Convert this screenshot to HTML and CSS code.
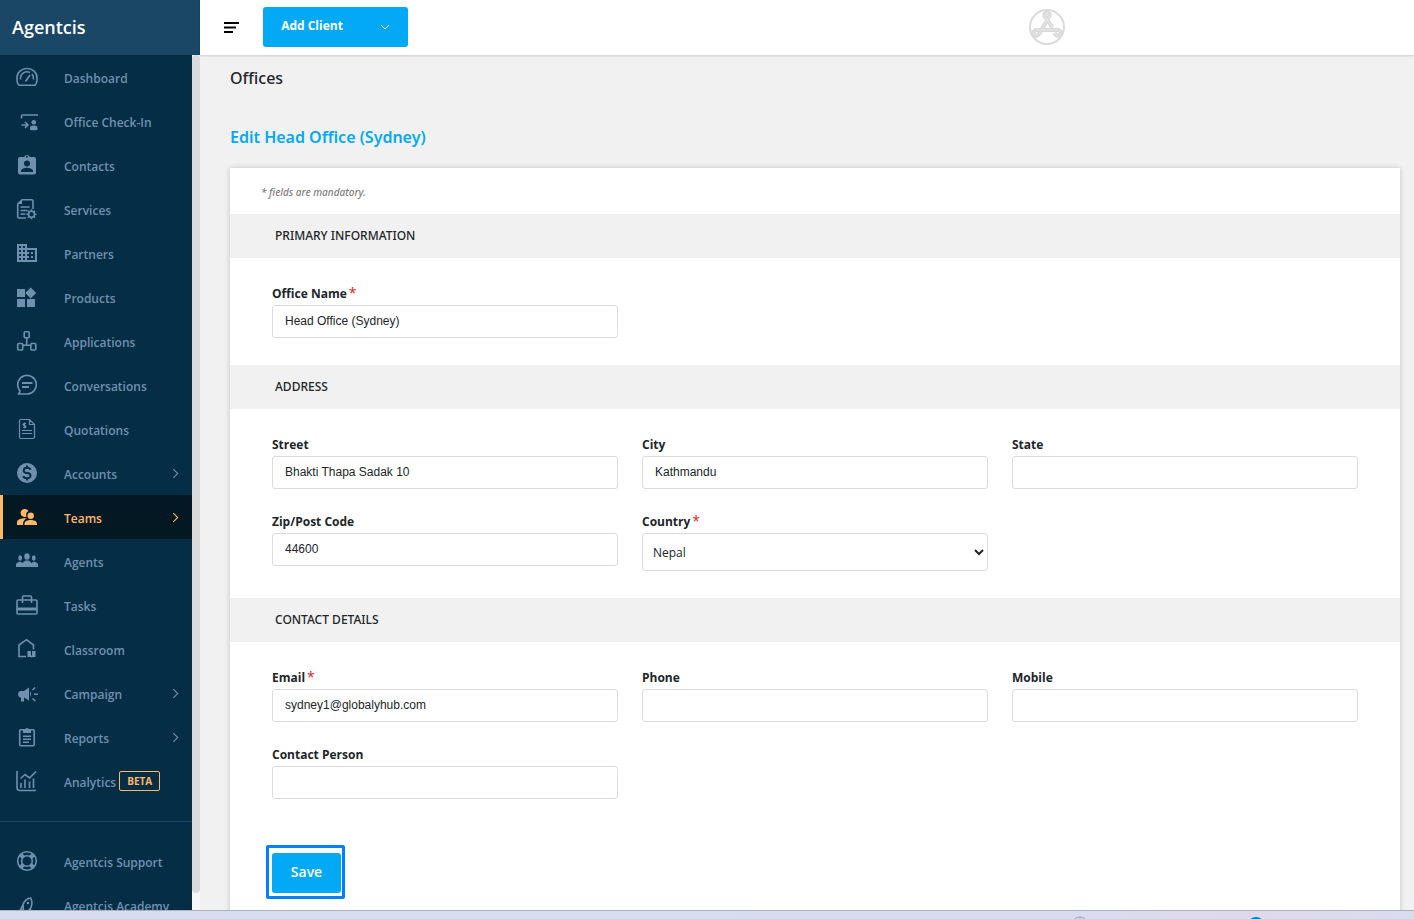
FILE: index.html
```html
<!DOCTYPE html>
<html lang="en">
<head>
    <meta charset="UTF-8">
    <meta name="viewport" content="width=device-width, initial-scale=1.0">
    <title>Edit Office - Agentcis</title>
    <link rel="stylesheet" href="styles.css">
</head>
<body>

    <div class="app">
        <!-- Sidebar -->
        <aside class="sidebar">
            <div class="brand">Agentcis</div>
            <div class="sidebar-scroll">
                <nav class="menu">
                    <a href="#" class="menu-item">
                        <svg class="icon" viewBox="0 0 22 22"><path d="M3 19.200h16q2-1.500 2-6.200v-1.500a10 9 0 0 0-20 0V13q0 4.700 2 6.200z"/><path d="M4.500 13.500v-1.500a6.500 6.500 0 0 1 9.500-5.500M16 8q1.500 2 1.500 5.500M9.500 15.500l4.500-6.500"/></svg>
                        <span>Dashboard</span>
                    </a>
                    <a href="#" class="menu-item">
                        <svg class="icon" viewBox="0 0 22 22"><path d="M5.500 8.500V6q0-1 1-1H22M5.500 15h6M9 12l3 3-3 3"/><circle class="fill" cx="17.800" cy="12.300" r="2.300"/><path class="fill" d="M14 19.500v-1q0-3 3-3h1.500q3 0 3 3v1q-.5.700-1.500.700h-4.500q-1 0-1.500-.7z"/></svg>
                        <span>Office Check-In</span>
                    </a>
                    <a href="#" class="menu-item">
                        <svg class="icon" viewBox="0 0 22 22"><path class="fill" fill-rule="evenodd" d="M4 3h4.300a2.800 2.800 0 0 1 5.400 0H18q2 0 2 2v13.500q0 2-2 2H4q-2 0-2-2V5q0-2 2-2zm7-1.200a1 1 0 1 0 0 2 1 1 0 0 0 0-2zm0 4.700a3 3 0 1 0 0 6 3 3 0 0 0 0-6zM5 18h12v-1c0-2-4-3.200-6-3.200S5 15 5 17z"/></svg>
                        <span>Contacts</span>
                    </a>
                    <a href="#" class="menu-item">
                        <svg class="icon" viewBox="0 0 22 22"><path d="M17 11V3q0-1.300-1.300-1.300H6L1.700 6v12.500q0 1.500 1.500 1.500H10M4.500 9h9M4.500 12.500h7M4.500 16h5"/><path class="fill" d="M1.700 6L6 1.700V6z"/><circle cx="15.500" cy="16.200" r="3"/><path d="M15.500 11.200v2M15.500 19.200v2M10.500 16.200h2M18.500 16.200h2M12 12.700l1.400 1.400M17.600 18.300l1.400 1.400M12 19.700l1.400-1.400M17.600 14.100l1.400-1.400"/></svg>
                        <span>Services</span>
                    </a>
                    <a href="#" class="menu-item">
                        <svg class="icon" viewBox="0 0 22 22"><path class="fill" fill-rule="evenodd" d="M1 2h10v4h10v14H1zm2 2v2h2V4zm4 0v2h2V4zM3 8v2h2V8zm4 0v2h2V8zm-4 4v2h2v-2zm4 0v2h2v-2zm-4 4v2h2v-2zm4 0v2h2v-2zm4-8v2h2v2h-2v2h2v2h-2v2h8V8zm4 2h2v2h-2zm0 4h2v2h-2z"/></svg>
                        <span>Partners</span>
                    </a>
                    <a href="#" class="menu-item">
                        <svg class="icon" viewBox="0 0 22 22"><path class="fill" d="M1 3h8v8H1zM1 13h8v8H1zM11 13h8v8h-8zM14.700 1.500l5.500 5.500-5.500 5.500L9.200 7z"/></svg>
                        <span>Products</span>
                    </a>
                    <a href="#" class="menu-item">
                        <svg class="icon" viewBox="0 0 22 22"><rect x="8.200" y="1.700" width="5" height="6" rx="1"/><rect x="1.700" y="13.500" width="5" height="6.500" rx="1"/><rect x="14.800" y="13.500" width="5" height="6.500" rx="1"/><path d="M10.700 8v7M6.700 15.200h8"/></svg>
                        <span>Applications</span>
                    </a>
                    <a href="#" class="menu-item">
                        <svg class="icon" viewBox="0 0 22 22"><path d="M2 20h9.500a9.300 9.300 0 1 0-8.900-5.400L4 17q0 2-2 3z"/><path class="bold" d="M6 9h10.500M6 13h7"/></svg>
                        <span>Conversations</span>
                    </a>
                    <a href="#" class="menu-item">
                        <svg class="icon thin" viewBox="0 0 22 22"><path d="M3.500 3q0-1.500 1.500-1.500h8.500l5 5V19q0 1.500-1.500 1.500H5q-1.500 0-1.500-1.500zM13.500 1.500v5h5M6 12.500h10M6 15.500h10M10 5.500H8.500Q7 5.500 7 6.500t1.500 1 1.500 1-1.500 1H7M8.500 4.500v6"/></svg>
                        <span>Quotations</span>
                    </a>
                    <a href="#" class="menu-item">
                        <svg class="icon" viewBox="0 0 22 22"><circle class="fill" cx="11" cy="11" r="10"/><path class="cut" d="M14.500 7.800Q14 5.800 11 5.800T7.700 8.300 11 11t3.500 2.700-3.500 2.500-3.700-2M11 3.500v2.300M11 16.200v2.300"/></svg>
                        <span>Accounts</span>
                        <svg class="arrow" viewBox="0 0 8 10"><path d="M2 1l4 4-4 4"/></svg>
                    </a>
                    <a href="#" class="menu-item active">
                        <svg class="icon" viewBox="0 0 22 22"><path class="fill" d="M9 3a4 4 0 0 1 3.500 2 4 4 0 0 0-2 5.500A4 4 0 1 1 9 3zM1 19v-2.500C1 14 4 12.500 8 12.300c1 0 2 .1 2.600.3C8 14 7 15.500 7 19z"/><circle class="fill" cx="14.700" cy="9.800" r="3.200"/><path class="fill" d="M8.500 19v-1.500c0-2.500 3.500-3.500 6.200-3.500s6.300 1 6.300 3.500V19z"/></svg>
                        <span>Teams</span>
                        <svg class="arrow" viewBox="0 0 8 10"><path d="M2 1l4 4-4 4"/></svg>
                    </a>
                    <a href="#" class="menu-item">
                        <svg class="icon" viewBox="0 0 22 22"><ellipse class="fill" cx="11" cy="6.500" rx="2.700" ry="3.300"/><ellipse class="fill" cx="4.200" cy="8" rx="1.900" ry="2.700"/><ellipse class="fill" cx="17.800" cy="8" rx="1.900" ry="2.700"/><path class="fill" d="M0 17v-2.500q0-1.500 4-3 1.500.7 2.500 1.500 1-1.300 3-2.500h3q2 1.200 3 2.500 1-.8 2.500-1.500 4 1.500 4 3V17z"/></svg>
                        <span>Agents</span>
                    </a>
                    <a href="#" class="menu-item">
                        <svg class="icon" viewBox="0 0 22 22"><rect x="1" y="6" width="20" height="14" rx="1"/><path d="M6.500 9V3q0-1 1-1h7q1 0 1 1v6"/><path class="band" d="M1 15h20"/></svg>
                        <span>Tasks</span>
                    </a>
                    <a href="#" class="menu-item">
                        <svg class="icon" viewBox="0 0 22 22"><path d="M10 18.500H3V7l7.500-5.300L17.500 7v4.500"/><path class="fill" d="M11.500 13h2.500q1 0 1.500 1 .5-1 1.500-1h2.500v6H17q-1 0-1.500.500-.5-.5-1.500-.500h-2.500z"/><path class="cut-thin" d="M15.500 13v4.500"/></svg>
                        <span>Classroom</span>
                    </a>
                    <a href="#" class="menu-item">
                        <svg class="icon" viewBox="0 0 22 22"><path class="fill" d="M4 9h4l5-3.500v13L8 15.500v4H5v-4H4q-2-1-2-3.200T4 9zM14 9q2 3 0 6z"/><path d="M18 12.200h4M16.500 8l2.800-2.500M16.500 16.500l2.800 2.500"/></svg>
                        <span>Campaign</span>
                        <svg class="arrow" viewBox="0 0 8 10"><path d="M2 1l4 4-4 4"/></svg>
                    </a>
                    <a href="#" class="menu-item">
                        <svg class="icon" viewBox="0 0 22 22"><rect x="3.700" y="3.700" width="14.500" height="16" rx="1"/><path class="fill" d="M7 3h2.300a1.900 1.900 0 0 1 3.400 0H15v4H7z"/><path d="M7 10.200h8M7 13.200h8M7 16.200h6"/></svg>
                        <span>Reports</span>
                        <svg class="arrow" viewBox="0 0 8 10"><path d="M2 1l4 4-4 4"/></svg>
                    </a>
                    <a href="#" class="menu-item">
                        <svg class="icon" viewBox="0 0 22 22"><path d="M1 1v16.500q0 3 3 3h16M5 18v-5M9 18V9.500M13.500 18v-6.500M17.500 18V8.500M4.500 8.500L9 4.500l4.500 3.500L20 1.500"/></svg>
                        <span>Analytics</span>
                        <span class="beta">BETA</span>
                    </a>

                    <hr class="divider">

                    <a href="#" class="menu-item">
                        <svg class="icon" viewBox="0 0 22 22"><circle cx="11" cy="11" r="9.300"/><circle cx="11" cy="11" r="5.300"/><path class="heavy" d="M4.800 4.800l2.700 2.700M17.200 4.800l-2.700 2.700M4.800 17.200l2.700-2.700M17.200 17.200l-2.700-2.700"/></svg>
                        <span>Agentcis Support</span>
                    </a>
                    <a href="#" class="menu-item">
                        <svg class="icon" viewBox="0 0 22 22"><path d="M7.500 17L7 10.500Q9 5 14.500 4q2.500 4 .5 9.500L11.500 18zM7 11l-2.500 4.500 3 1M14.500 14.500v5l-3-2"/><circle class="fill" cx="12" cy="9" r="1.300"/></svg>
                        <span>Agentcis Academy</span>
                    </a>
                </nav>
                <div class="scrollbar"></div>
            </div>
        </aside>

        <div class="main">
            <!-- Top bar -->
            <header class="topbar">
                <button type="button" class="toggle" aria-label="Toggle menu">
                    <svg width="16" height="12" viewBox="0 0 16 12"><path d="M0 2h15M0 6.500h12M0 11h9"/></svg>
                </button>
                <div class="add-client">
                    <button type="button" class="add-btn">Add Client</button>
                    <button type="button" class="add-drop" aria-label="More">
                        <svg width="10" height="6" viewBox="0 0 10 6"><path d="M1 1l4 4 4-4"/></svg>
                    </button>
                </div>
                <svg class="badge-logo" viewBox="0 0 36 36">
                    <circle cx="18" cy="18" r="17"/>
                    <path class="band" d="M23.500 18.500L15.500 7C14 2.500 22 2.500 20.500 7L10.500 24.500C8 28.500 4 27 4.500 23.500C5 21.500 6 21 8 21H28.500C30.500 21 31.500 22 31.500 23.500C32 27 28 28.500 25.500 24"/>
                    <path class="band-line" d="M23.500 18.500L15.500 7C14 2.500 22 2.500 20.500 7L10.500 24.500C8 28.500 4 27 4.500 23.500C5 21.500 6 21 8 21H28.500C30.500 21 31.500 22 31.500 23.500C32 27 28 28.500 25.500 24"/>
                </svg>
            </header>

            <main class="content">
                <h1>Offices</h1>
                <h2>Edit Head Office (Sydney)</h2>

                <form class="card">
                    <p class="note">* fields are mandatory.</p>

                    <h3>PRIMARY INFORMATION</h3>
                    <div class="fields">
                        <div class="field">
                            <label for="officeName">Office Name<span class="req">*</span></label>
                            <input type="text" id="officeName" value="Head Office (Sydney)">
                        </div>
                    </div>

                    <h3>ADDRESS</h3>
                    <div class="fields">
                        <div class="field">
                            <label for="street">Street</label>
                            <input type="text" id="street" value="Bhakti Thapa Sadak 10">
                        </div>
                        <div class="field">
                            <label for="city">City</label>
                            <input type="text" id="city" value="Kathmandu">
                        </div>
                        <div class="field">
                            <label for="state">State</label>
                            <input type="text" id="state">
                        </div>
                        <div class="field">
                            <label for="zip">Zip/Post Code</label>
                            <input type="text" id="zip" value="44600">
                        </div>
                        <div class="field">
                            <label for="country">Country<span class="req">*</span></label>
                            <select id="country">
                                <option>Nepal</option>
                                <option>Australia</option>
                            </select>
                        </div>
                    </div>

                    <h3>CONTACT DETAILS</h3>
                    <div class="fields">
                        <div class="field">
                            <label for="email">Email<span class="req">*</span></label>
                            <input type="email" id="email" value="sydney1@globalyhub.com">
                        </div>
                        <div class="field">
                            <label for="phone">Phone</label>
                            <input type="text" id="phone">
                        </div>
                        <div class="field">
                            <label for="mobile">Mobile</label>
                            <input type="text" id="mobile">
                        </div>
                        <div class="field">
                            <label for="contactPerson">Contact Person</label>
                            <input type="text" id="contactPerson">
                        </div>
                    </div>

                    <div class="save-box">
                        <button type="button" class="save">Save</button>
                    </div>
                </form>
            </main>
        </div>
    </div>

    <!-- Bottom strip -->
    <footer class="strip">
        <svg class="strip-icons" viewBox="0 0 200 8"><circle class="clock" cx="13" cy="13" r="7"/><path class="clock" d="M13 7v5"/><circle class="dot" cx="189" cy="14" r="8"/></svg>
    </footer>

</body>
</html>
```
FILE: styles.css
```css
* {
    box-sizing: border-box;
}

body {
    font-family: "Open Sans", sans-serif;
    margin: 0;
    height: 100vh;
    display: flex;
    flex-direction: column;
    overflow: hidden;
    background-color: #f1f1f1;
    color: #212529;
}

button {
    font-family: inherit;
    border: none;
    padding: 0;
    cursor: pointer;
}

.app {
    flex: 1;
    min-height: 0;
    display: flex;
}

/* Sidebar */
.sidebar {
    width: 200px;
    flex-shrink: 0;
    display: flex;
    flex-direction: column;
    background-color: #062d46;
}

.brand {
    height: 55px;
    flex-shrink: 0;
    padding-left: 12px;
    line-height: 55px;
    font-size: 18px;
    font-weight: 600;
    color: white;
    background-color: #1a4766;
}

.sidebar-scroll {
    flex: 1;
    min-height: 0;
    display: flex;
    overflow: hidden;
}

.menu {
    flex: 1;
}

.scrollbar {
    width: 8px;
    background-color: #f8f8f8;
}

.scrollbar::before {
    content: "";
    display: block;
    height: 98%;
    border-radius: 4px;
    background-color: #dadada;
}

.menu-item {
    display: flex;
    align-items: center;
    height: 44px;
    padding: 2px 12px 0 16px;
    font-size: 12px;
    font-weight: 600;
    white-space: nowrap;
    color: #6f91af;
    text-decoration: none;
}

.menu-item.active {
    padding-left: 13px;
    border-left: 3px solid #ffb866;
    color: #ffb866;
    background-color: #041824;
}

.icon {
    width: 22px;
    height: 22px;
    margin: 0 26px 2px 0;
    flex-shrink: 0;
    fill: none;
    stroke: currentColor;
    stroke-width: 1.6;
}

.icon .fill {
    fill: currentColor;
    stroke: none;
}

.icon .bold {
    stroke-width: 2;
}

.icon .band {
    stroke-width: 3;
}

.icon .heavy {
    stroke-width: 4;
}

.icon .cut {
    stroke: #062d46;
    stroke-width: 2;
}

.icon .cut-thin {
    stroke: #062d46;
    stroke-width: 1;
}

.icon.thin {
    stroke-width: 1.2;
}

.arrow {
    width: 9px;
    height: 11px;
    margin: 0 0 2px auto;
    fill: none;
    stroke: currentColor;
}

.beta {
    margin: 0 0 2px 3px;
    padding: 0 7px;
    line-height: 18px;
    border: 1px solid #ffb866;
    border-radius: 2px;
    font-size: 10px;
    font-weight: bold;
    color: #ffb866;
}

.divider {
    margin: 18px 0 17px;
    border: none;
    border-top: 1px solid #1a4766;
}

/* Top bar */
.main {
    flex: 1;
    min-width: 0;
    display: flex;
    flex-direction: column;
}

.topbar {
    height: 55px;
    flex-shrink: 0;
    display: flex;
    align-items: center;
    padding: 0 0 2px 24px;
    background-color: white;
    box-shadow: 0 1px 2px rgba(0, 0, 0, 0.15);
}

.toggle {
    height: 16px;
    margin-right: 23px;
    background: none;
}

.toggle svg {
    fill: none;
    stroke: black;
    stroke-width: 2;
}

.add-client {
    display: flex;
    width: 145px;
    height: 40px;
    border-radius: 3px;
    overflow: hidden;
}

.add-btn, .add-drop {
    background-color: #03a9f4;
    color: white;
}

.add-btn {
    width: 98px;
    padding-bottom: 3px;
    font-size: 12px;
    font-weight: bold;
}

.add-drop {
    flex: 1;
}

.add-drop svg {
    display: block;
    margin: 0 auto;
    fill: none;
    stroke: white;
}

.badge-logo {
    width: 36px;
    height: 36px;
    margin: 0 349px 0 auto;
    fill: none;
    stroke: #dadada;
    stroke-width: 2;
}

.badge-logo .band {
    stroke-width: 4;
}

.badge-logo .band-line {
    stroke: #e6e6e6;
    stroke-width: 1;
}

/* Page content */
.content {
    flex: 1;
    min-height: 0;
    padding: 11px 14px 0 30px;
    overflow: hidden;
}

h1, h2, h3, .note {
    font-family: "Noto Sans", "Open Sans", sans-serif;
    font-weight: 500;
}

h1, h2 {
    margin: 0;
    font-size: 16px;
    line-height: 24px;
}

h2 {
    margin: 35px 0 19px;
    font-weight: 600;
    color: #03a9f4;
}

.card {
    min-height: 100%;
    background-color: white;
    box-shadow: 0 0 5px rgba(0, 0, 0, 0.2);
}

.note {
    margin: 0;
    padding: 2px 31px 0;
    line-height: 44px;
    font-size: 10px;
    font-style: italic;
    color: #808080;
}

h3 {
    margin: 0;
    padding-left: 45px;
    line-height: 44px;
    font-size: 12px;
    background-color: #f1f1f1;
}

.fields {
    display: grid;
    grid-template-columns: repeat(3, 1fr);
    gap: 23px 24px;
    padding: 26px 42px 27px;
}

label {
    display: block;
    margin-bottom: 1px;
    font-size: 12px;
    font-weight: bold;
    line-height: 20px;
}

.req {
    margin-left: 2px;
    font-size: 14px;
    font-weight: normal;
    line-height: 16px;
    color: #e01b24;
}

input, select {
    display: block;
    width: 100%;
    height: 33px;
    padding: 0 12px 1px;
    border: 1px solid #dcdcdc;
    border-radius: 3px;
    font-family: "Liberation Sans", Arial, sans-serif;
    font-size: 12px;
    color: #212529;
    background-color: white;
}

select {
    height: 38px;
    padding: 0 6px;
    font-family: inherit;
}

.save-box {
    width: 79px;
    margin: 19px 0 0 36px;
    padding: 5px 1px 3px 3px;
    border: 3px solid #0080ff;
    border-radius: 2px;
}

.save {
    display: block;
    width: 69px;
    height: 40px;
    padding-bottom: 3px;
    border-radius: 3px;
    font-size: 14px;
    font-weight: 600;
    color: white;
    background-color: #03a9f4;
}

/* Bottom strip */
.strip {
    height: 9px;
    flex-shrink: 0;
    border-top: 1px solid #b0b0bc;
    background: linear-gradient(90deg, #d7ddee, #d9dcf0 75%, #dfdaea 88%, #d9dcef);
}

.strip-icons {
    display: block;
    width: 200px;
    height: 8px;
    margin: 0 147px 0 auto;
}

.strip-icons .clock {
    fill: none;
    stroke: #a596b0;
}

.strip-icons .dot {
    fill: #0078d4;
}
```
